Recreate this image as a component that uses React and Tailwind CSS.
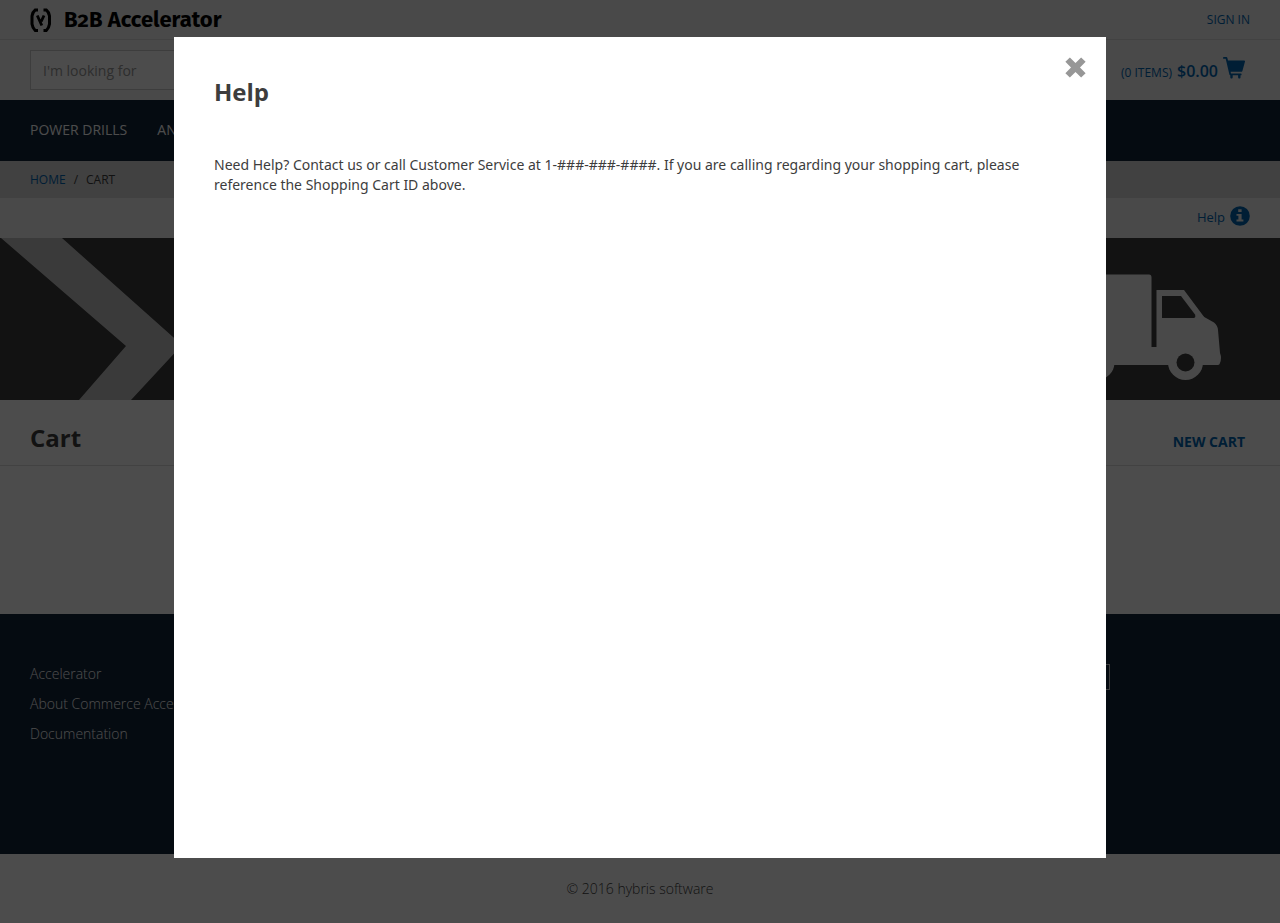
import React from 'react';

function CartIcon() {
  return (
    <svg viewBox="0 0 22 22" className="h-[22px] w-[22px]" fill="currentColor" aria-hidden="true">
      <path d="M.8 0h2.600c.5 0 .8.2.9.7L5 3.500h16.100c.7 0 1 .4.9 1l-2.600 9.400c-.2.600-.6.900-1.200.900H7.600l.4 1.700h9.600c.6 0 1 .4 1 .9s-.4.900-1 .9H17.500v1.900c0 .8-.5 1.300-1.200 1.300s-1.200-.5-1.200-1.300v-1.900H9.700v1.900c0 .8-.5 1.300-1.200 1.300s-1.200-.5-1.200-1.300v-2c-.5-.1-.8-.4-.9-.8L2.700 1.800H.8C.3 1.800 0 1.400 0 .9S.3 0 .8 0z" />
    </svg>
  );
}

function InfoIcon() {
  return (
    <svg viewBox="0 0 20 20" className="h-5 w-5" aria-hidden="true">
      <circle cx="10" cy="10" r="9.800" fill="currentColor" />
      <path d="M8.200 3.300h3.400v2.800H8.200zM6.500 8h5.100v5.500h1.800v1.900H6.500v-1.900h1.900V9.700H6.500z" fill="#f4f4f4" />
    </svg>
  );
}

function CloseIcon() {
  return (
    <svg viewBox="0 0 22 22" className="h-[21px] w-[21px]" fill="currentColor" aria-hidden="true">
      <path d="M5.100.400 11 6.300 16.900.400 21.600 5.100 15.700 11l5.900 5.900-4.700 4.700L11 15.700l-5.900 5.900L.4 16.900 6.300 11 .4 5.100z" />
    </svg>
  );
}

function LogoMark() {
  return (
    <svg viewBox="0 0 22 24" className="h-6 w-[22px]" fill="none" stroke="#000" aria-hidden="true">
      <path d="M8 2H5.200Q2.600 4 2 8v8q.6 4 3.200 6.500H8M13.500 2h2.800q2.600 2 3.200 6v8q-.6 4-3.200 6.500h-2.800" strokeWidth="3" />
      <path d="M7.300 7.500l4.500 10M14 7.500l-2.800 6" strokeWidth="2.800" />
    </svg>
  );
}

function Banner() {
  return (
    <div className="flex h-[162px] justify-between overflow-hidden bg-[#3d3d3d]">
      <svg viewBox="0 0 182 162" className="h-full w-[182px]" aria-hidden="true">
        <path d="M1 0h61l120 107-51 55H79l47-54z" fill="#c4c4c4" />
      </svg>
      <svg viewBox="0 0 260 162" className="h-full w-[260px]" fill="#f6f6f6" aria-hidden="true">
        <path d="M20 36.500h109q2.500 0 2.500 3V109h5V52h27.500l19 25.500q1 1.500 3 2.500l8 4.500q3.500 2.500 4 7.500l2 23q2 5 0 10-.5 2-2 2H20z" />
        <circle cx="77" cy="124.500" r="17.500" />
        <circle cx="165.500" cy="124.500" r="17.500" />
        <circle cx="165.500" cy="124.500" r="9" fill="#3d3d3d" />
        <circle cx="77" cy="124.500" r="9" fill="#3d3d3d" />
        <path d="M142 58h19l14 18.500q1 3-1 3.500h-32z" fill="#3d3d3d" />
      </svg>
    </div>
  );
}

function Page() {
  return (
    <div className="min-h-screen bg-white">
      <header className="bg-[#f4f4f4]">
        <div className="flex h-10 items-center justify-between border-b border-[#dddddd] px-[30px]">
          <a href="#home" className="flex items-center gap-3 text-black">
            <LogoMark />
            <span className="font-['Fira_Sans','Open_Sans',sans-serif] text-[22px] font-bold leading-7 oldstyle-nums">B2B Accelerator</span>
          </a>
          <a href="#signin" className="text-xs text-[#0066b3]">SIGN IN</a>
        </div>
        <div className="flex h-[60px] items-center justify-between px-[30px]">
          <input
            type="search"
            aria-label="Search"
            placeholder="I'm looking for"
            className="h-10 w-[400px] border border-[#cccccc] bg-white px-3 text-sm placeholder:text-[#999999]"
          />
          <a href="#cart" className="flex items-start gap-[5px] pr-[5px] text-[#0066b3]">
            <span className="flex items-baseline gap-[5px] pt-[2px]">
              <span className="text-xs">(0 ITEMS)</span>
              <span className="text-base font-semibold">$0.00</span>
            </span>
            <CartIcon />
          </a>
        </div>
      </header>
      <nav className="flex h-[61px] items-center gap-[30px] bg-[#12253a] px-[30px] pb-[2px] text-sm text-white">
        <a href="#drills">POWER DRILLS</a>
        <a href="#grinders">ANGLE GRINDERS</a>
      </nav>
      <ol className="flex h-[37px] items-center gap-2 bg-[#d9d9d9] px-[30px] text-xs text-[#3d3d3d]">
        <li><a href="#home" className="text-[#0066b3]">HOME</a></li>
        <li aria-hidden="true">/</li>
        <li>CART</li>
      </ol>
      <div className="flex h-10 items-center justify-end bg-[#f4f4f4] px-[30px]">
        <a href="#help" className="flex items-start gap-[5px] pb-[2px] text-[#0066b3]">
          <span className="text-[13px] leading-[22px]">Help</span>
          <InfoIcon />
        </a>
      </div>
      <Banner />
      <main className="min-h-[214px]">
        <div className="flex h-[66px] items-end justify-between border-b border-[#dddddd] pb-[11px] pl-[30px] pr-[35px]">
          <h1 className="text-2xl font-bold text-[#3d3d3d]">Cart</h1>
          <a href="#new" className="pb-[2px] text-sm font-bold text-[#0066b3]">NEW CART</a>
        </div>
      </main>
      <footer>
        <div className="flex min-h-60 bg-[#12253a] px-[30px] pt-[50px] text-sm font-light text-white">
          <ul className="leading-5">
            <li className="mb-[10px]"><a href="#accelerator">Accelerator</a></li>
            <li className="mb-[10px]"><a href="#about">About Commerce Accelerator</a></li>
            <li><a href="#docs">Documentation</a></li>
          </ul>
          <div className="ml-auto mr-[140px]">
            <select aria-label="Language" className="h-[26px] w-[130px] appearance-none border border-[#cccccc] bg-transparent px-2">
              <option>English</option>
            </select>
          </div>
        </div>
        <p className="pb-6 pt-[25px] text-center text-sm font-light text-[#3d3d3d]">© 2016 hybris software</p>
      </footer>
    </div>
  );
}

export default function App() {
  return (
    <div className="font-['Open_Sans',sans-serif]">
      <Page />
      <div className="fixed inset-0 flex justify-center bg-black/70 pb-[65px] pt-[37px]">
        <section role="dialog" aria-modal="true" aria-labelledby="help-title" className="w-full max-w-[932px] bg-white px-5 pt-5 text-[#3d3d3d]">
          <div className="flex items-start justify-between pl-5">
            <h2 id="help-title" className="pt-[19px] text-2xl font-bold">Help</h2>
            <button type="button" aria-label="Close" className="text-[#979797]"><CloseIcon /></button>
          </div>
          <p className="mt-[47px] px-5 font-['Noto_Sans',sans-serif] text-sm">
            Need Help? Contact us or call Customer Service at 1-###-###-####. If you are calling regarding your shopping cart, please reference the Shopping Cart ID above.
          </p>
        </section>
      </div>
    </div>
  );
}
